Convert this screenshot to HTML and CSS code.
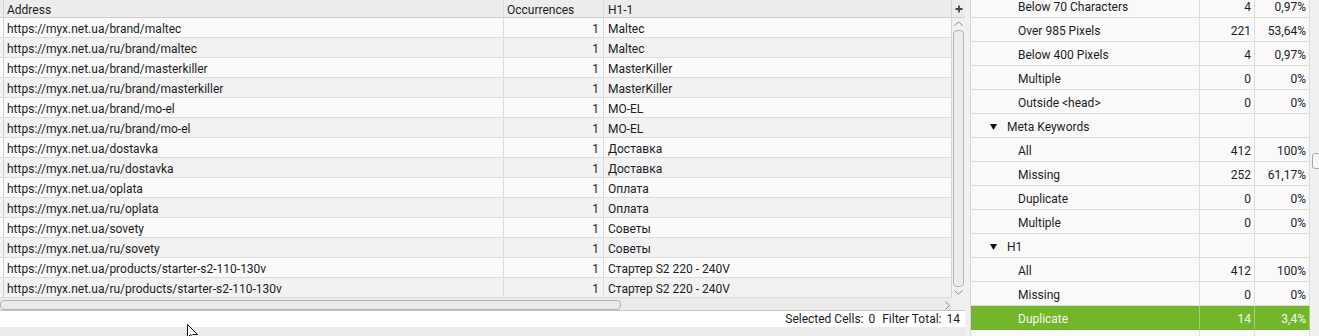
FILE: index.html
```html
<!DOCTYPE html>
<html lang="en">
<head>
<meta charset="UTF-8">
<title>H1 - Duplicate</title>
<link rel="stylesheet" href="styles.css">
</head>
<body>
<div class="app">
    <div class="left-pane">
        <div class="table-area">
            <div class="grid">
                <div class="row head">
                    <div class="gutter"></div>
                    <div class="cell c-addr">Address</div>
                    <div class="cell c-occ">Occurrences</div>
                    <div class="cell c-h1">H1-1</div>
                </div>
                <div class="row"><div class="gutter"></div><div class="cell c-addr">https://myx.net.ua/brand/maltec</div><div class="cell c-occ num">1</div><div class="cell c-h1">Maltec</div></div>
                <div class="row alt"><div class="gutter"></div><div class="cell c-addr">https://myx.net.ua/ru/brand/maltec</div><div class="cell c-occ num">1</div><div class="cell c-h1">Maltec</div></div>
                <div class="row"><div class="gutter"></div><div class="cell c-addr">https://myx.net.ua/brand/masterkiller</div><div class="cell c-occ num">1</div><div class="cell c-h1">MasterKiller</div></div>
                <div class="row alt"><div class="gutter"></div><div class="cell c-addr">https://myx.net.ua/ru/brand/masterkiller</div><div class="cell c-occ num">1</div><div class="cell c-h1">MasterKiller</div></div>
                <div class="row"><div class="gutter"></div><div class="cell c-addr">https://myx.net.ua/brand/mo-el</div><div class="cell c-occ num">1</div><div class="cell c-h1">MO-EL</div></div>
                <div class="row alt"><div class="gutter"></div><div class="cell c-addr">https://myx.net.ua/ru/brand/mo-el</div><div class="cell c-occ num">1</div><div class="cell c-h1">MO-EL</div></div>
                <div class="row"><div class="gutter"></div><div class="cell c-addr">https://myx.net.ua/dostavka</div><div class="cell c-occ num">1</div><div class="cell c-h1">Доставка</div></div>
                <div class="row alt"><div class="gutter"></div><div class="cell c-addr">https://myx.net.ua/ru/dostavka</div><div class="cell c-occ num">1</div><div class="cell c-h1">Доставка</div></div>
                <div class="row"><div class="gutter"></div><div class="cell c-addr">https://myx.net.ua/oplata</div><div class="cell c-occ num">1</div><div class="cell c-h1">Оплата</div></div>
                <div class="row alt"><div class="gutter"></div><div class="cell c-addr">https://myx.net.ua/ru/oplata</div><div class="cell c-occ num">1</div><div class="cell c-h1">Оплата</div></div>
                <div class="row"><div class="gutter"></div><div class="cell c-addr">https://myx.net.ua/sovety</div><div class="cell c-occ num">1</div><div class="cell c-h1">Советы</div></div>
                <div class="row alt"><div class="gutter"></div><div class="cell c-addr">https://myx.net.ua/ru/sovety</div><div class="cell c-occ num">1</div><div class="cell c-h1">Советы</div></div>
                <div class="row"><div class="gutter"></div><div class="cell c-addr">https://myx.net.ua/products/starter-s2-110-130v</div><div class="cell c-occ num">1</div><div class="cell c-h1">Стартер S2 220 - 240V</div></div>
                <div class="row alt"><div class="gutter"></div><div class="cell c-addr">https://myx.net.ua/ru/products/starter-s2-110-130v</div><div class="cell c-occ num">1</div><div class="cell c-h1">Стартер S2 220 - 240V</div></div>
            </div>
            <div class="vscroll">
                <div class="plus">
                    <svg width="8" height="8" viewBox="0 0 8 8"><path d="M4 0.5V7.5M0.5 4H7.5" stroke="#444" stroke-width="1.8"/></svg>
                </div>
                <div class="vtrack">
                    <div class="arrow">
                        <svg width="9" height="5" viewBox="0 0 9 5"><path d="M0.5 4.5L4.5 0.8L8.5 4.5" fill="none" stroke="#8a8a8a" stroke-width="1"/></svg>
                    </div>
                    <div class="vthumb"></div>
                    <div class="arrow">
                        <svg width="9" height="5" viewBox="0 0 9 5"><path d="M0.5 0.5L4.5 4.2L8.5 0.5" fill="none" stroke="#8a8a8a" stroke-width="1"/></svg>
                    </div>
                </div>
            </div>
        </div>
        <div class="hscroll">
            <div class="htrack">
                <div class="hthumb"></div>
                <svg class="harrow" width="5" height="9" viewBox="0 0 5 9"><path d="M0.5 0.5L4.2 4.5L0.5 8.5" fill="none" stroke="#8a8a8a" stroke-width="1"/></svg>
            </div>
            <div class="corner"></div>
        </div>
        <div class="status">
            <span>Selected Cells:</span><span class="val">0</span>
            <span class="label2">Filter Total:</span><span class="val">14</span>
        </div>
        <div class="bottom"></div>
    </div>

    <div class="right-pane">
        <div class="srow"><div class="name leaf">Below 70 Characters</div><div class="n">4</div><div class="p">0,97%</div></div>
        <div class="srow"><div class="name leaf">Over 985 Pixels</div><div class="n">221</div><div class="p">53,64%</div></div>
        <div class="srow"><div class="name leaf">Below 400 Pixels</div><div class="n">4</div><div class="p">0,97%</div></div>
        <div class="srow"><div class="name leaf">Multiple</div><div class="n">0</div><div class="p">0%</div></div>
        <div class="srow"><div class="name leaf">Outside &lt;head&gt;</div><div class="n">0</div><div class="p">0%</div></div>
        <div class="srow"><div class="name group"><svg class="tri" width="7" height="6" viewBox="0 0 7 6"><path d="M0 0H7L3.5 6Z" fill="#111"/></svg>Meta Keywords</div><div class="n"></div><div class="p"></div></div>
        <div class="srow"><div class="name leaf">All</div><div class="n">412</div><div class="p">100%</div></div>
        <div class="srow"><div class="name leaf">Missing</div><div class="n">252</div><div class="p">61,17%</div></div>
        <div class="srow"><div class="name leaf">Duplicate</div><div class="n">0</div><div class="p">0%</div></div>
        <div class="srow"><div class="name leaf">Multiple</div><div class="n">0</div><div class="p">0%</div></div>
        <div class="srow"><div class="name group"><svg class="tri" width="7" height="6" viewBox="0 0 7 6"><path d="M0 0H7L3.5 6Z" fill="#111"/></svg>H1</div><div class="n"></div><div class="p"></div></div>
        <div class="srow"><div class="name leaf">All</div><div class="n">412</div><div class="p">100%</div></div>
        <div class="srow"><div class="name leaf">Missing</div><div class="n">0</div><div class="p">0%</div></div>
        <div class="srow selected"><div class="name leaf">Duplicate</div><div class="n">14</div><div class="p">3,4%</div></div>
        <div class="srow"><div class="name leaf"></div><div class="n"></div><div class="p"></div></div>
    </div>

    <div class="edge">
        <div class="handle"></div>
    </div>
</div>

<svg class="cursor" width="14" height="14" viewBox="0 0 14 14"><path d="M0.5 0.5V13.5L3.5 10.5L6 14M0.5 0.5L10.5 10.5H5.5" fill="#fff" stroke="#111" stroke-width="1"/></svg>
</body>
</html>
```

FILE: styles.css
```css
* {
    box-sizing: border-box;
}

body {
    margin: 0;
    width: 1319px;
    height: 336px;
    overflow: hidden;
    position: relative;
    background-color: #f0f0f0;
    font-family: Roboto, 'Noto Sans', sans-serif;
    font-size: 12px;
    color: #1c1c24;
}

.app {
    display: flex;
    height: 336px;
    overflow: hidden;
}

/* left: results table */

.left-pane {
    width: 965px;
    display: flex;
    flex-direction: column;
    background-color: #ebebeb;
}

.table-area {
    display: flex;
    height: 298px;
}

.grid {
    width: 951px;
    background: #fafafa;
}

.row {
    display: flex;
    height: 20px;
    line-height: 16px;
    border-bottom: 1px solid #dcdcdc;
    background: #fafafa;
    white-space: nowrap;
}

.row.alt {
    background: #f2f2f2;
}

.row.head {
    height: 18px;
    line-height: 14px;
    background: #ececec;
    border-bottom-color: #cfcfcf;
}

.gutter {
    width: 4px;
    border-right: 1px solid #d2d2d2;
}

.cell {
    overflow: hidden;
    border-right: 1px solid #dcdcdc;
    padding: 3px 0 0 3px;
}

.c-addr {
    width: 500px;
}

.c-occ {
    width: 100px;
}

.c-h1 {
    width: 347px;
    border-right: none;
    padding-left: 4px;
}

.num {
    text-align: right;
    padding-right: 4px;
}

.vscroll {
    width: 14px;
    border-left: 1px solid #d6d6d6;
    display: flex;
    flex-direction: column;
}

.plus {
    height: 18px;
    background: #ececec;
    border-bottom: 1px solid #cfcfcf;
    display: flex;
    justify-content: center;
    align-items: center;
}

.vtrack {
    flex: 1;
    display: flex;
    flex-direction: column;
    background: #f0f0f0;
    padding: 0 1px;
}

.arrow {
    height: 11px;
    display: flex;
    justify-content: center;
    align-items: center;
}

.vthumb {
    flex: 1;
    margin: 1px 0 0 0;
    border: 1px solid #b4b4b4;
    border-radius: 4px;
    background: #ececec;
}

.hscroll {
    display: flex;
    height: 13px;
    border-bottom: 1px solid #c6c6c6;
}

.htrack {
    width: 951px;
    display: flex;
    align-items: flex-start;
    padding-top: 2px;
    background: #ebebeb;
}

.hthumb {
    width: 621px;
    height: 10px;
    border: 1px solid #b4b4b4;
    border-radius: 4px;
    background: #eaeaea;
}

.harrow {
    margin: 1px 0 0 324px;
}

.corner {
    width: 14px;
    background: #efefef;
}

.status {
    height: 16px;
    line-height: 17px;
    background: #fff;
    text-align: right;
    padding-right: 5px;
    white-space: nowrap;
}

.status .val {
    margin-left: 5px;
}

.status .label2 {
    margin-left: 4px;
}

.bottom {
    flex: 1;
    background: #ebebeb;
}

/* right: overview tree */

.right-pane {
    width: 341px;
    height: 342px;
    margin-left: 5px;
    margin-top: -6px;
    border-left: 1px solid #d6d6d6;
    background: #f9f9f9;
}

.srow {
    display: flex;
    height: 24px;
    line-height: 26px;
    border-bottom: 1px solid #dcdcdc;
    white-space: nowrap;
}

.srow .name {
    width: 229px;
    border-right: 1px solid #dcdcdc;
}

.srow .n,
.srow .p {
    width: 55px;
    text-align: right;
    padding-right: 3px;
    border-right: 1px solid #dcdcdc;
}

.leaf {
    padding-left: 47px;
}

.group {
    padding-left: 19px;
}

.tri {
    margin-right: 10px;
    vertical-align: 1px;
}

.srow.selected {
    background: #72b62c;
    color: #f3f7ee;
    border-bottom-color: #72b62c;
}

.srow.selected .name,
.srow.selected .n,
.srow.selected .p {
    border-right-color: #a2cf78;
}

.edge {
    flex: 1;
    padding-top: 153px;
}

.handle {
    width: 9px;
    height: 16px;
    margin-left: 2px;
    border: 1px solid #a8a8a8;
    border-radius: 3px;
    background: #f6f6f6;
}

.cursor {
    position: absolute;
    left: 187px;
    top: 324px;
}
```
